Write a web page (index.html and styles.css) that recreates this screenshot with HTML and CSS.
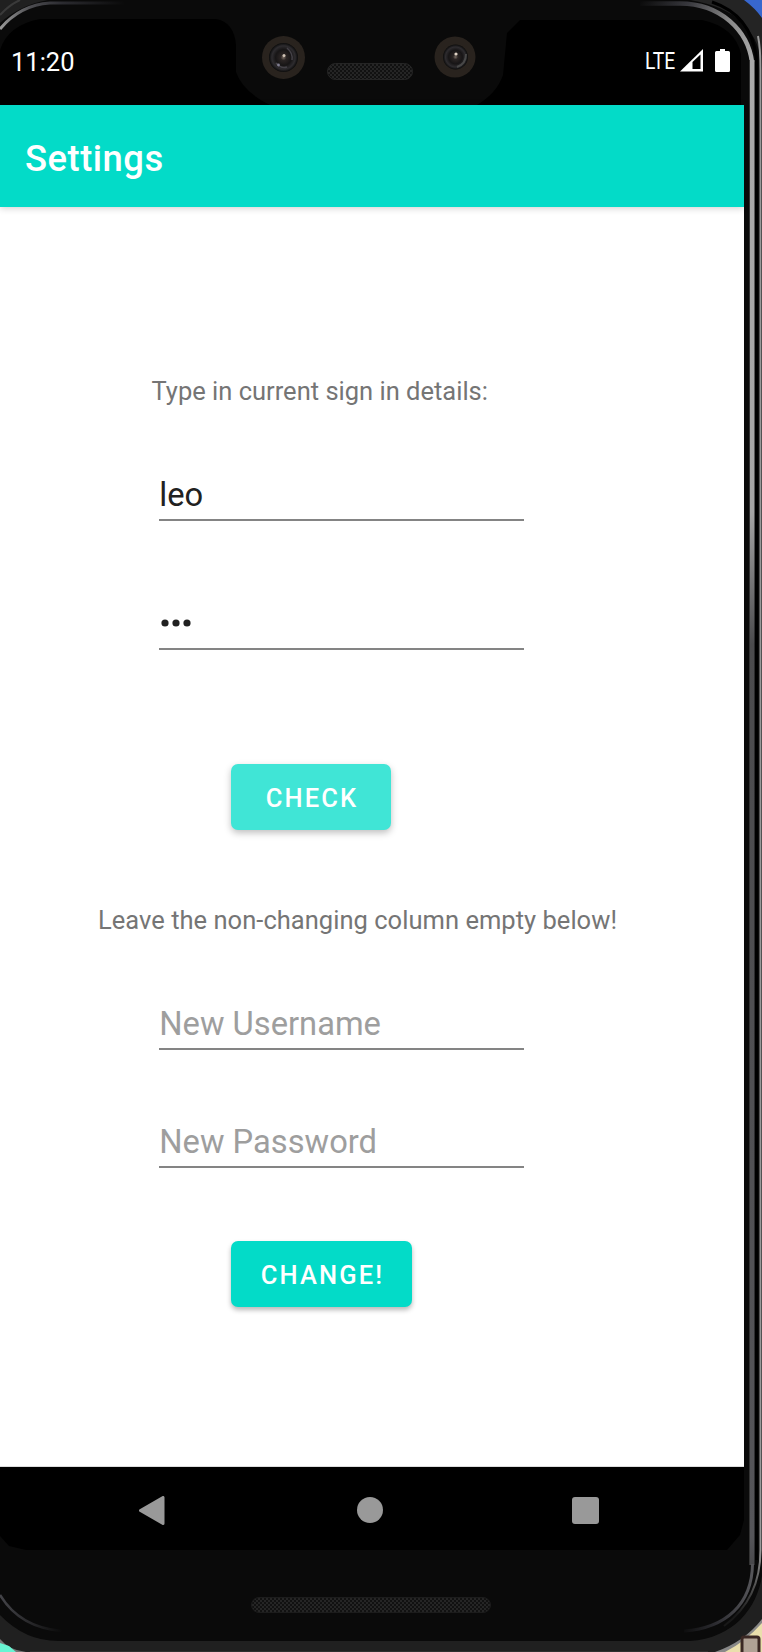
FILE: index.html
```html
<!DOCTYPE html>
<html lang="en">
<head>
<meta charset="utf-8">
<title>Settings</title>
<link rel="stylesheet" href="styles.css">
</head>
<body>
<div class="phone">
  <svg class="frame" viewBox="0 0 762 1652" aria-hidden="true">
    <defs>
      <linearGradient id="rail" gradientUnits="userSpaceOnUse" x1="0" y1="0" x2="0" y2="1652">
        <stop offset="0" stop-color="#777"/><stop offset=".03" stop-color="#aaa"/><stop offset=".31" stop-color="#a5a5a5"/><stop offset=".39" stop-color="#4b4b4d"/><stop offset=".93" stop-color="#555559"/><stop offset="1" stop-color="#222"/>
      </linearGradient>
      <linearGradient id="topRight" gradientUnits="userSpaceOnUse" x1="640" y1="0" x2="752" y2="60">
        <stop offset="0" stop-color="#0a0a0a"/><stop offset=".35" stop-color="#38383d"/><stop offset=".7" stop-color="#8a8a8a"/><stop offset="1" stop-color="#aaa"/>
      </linearGradient>
      <linearGradient id="topLeft" gradientUnits="userSpaceOnUse" x1="0" y1="0" x2="125" y2="0">
        <stop offset="0" stop-color="#999"/><stop offset=".25" stop-color="#4c4c50"/><stop offset=".5" stop-color="#2b2b30"/><stop offset="1" stop-color="#0a0a0a"/>
      </linearGradient>
      <linearGradient id="bottomLeft" gradientUnits="userSpaceOnUse" x1="0" y1="0" x2="62" y2="0">
        <stop offset="0" stop-color="#444449"/><stop offset="1" stop-color="#0a0a0a"/>
      </linearGradient>
      <linearGradient id="bottomRight" gradientUnits="userSpaceOnUse" x1="680" y1="0" x2="752" y2="0">
        <stop offset="0" stop-color="#0a0a0a"/><stop offset=".5" stop-color="#2c2c31"/><stop offset="1" stop-color="#555559"/>
      </linearGradient>
      <linearGradient id="edge" gradientUnits="userSpaceOnUse" x1="0" y1="1550" x2="0" y2="1615">
        <stop offset="0" stop-color="#999"/><stop offset="1" stop-color="#181818"/>
      </linearGradient>
      <radialGradient id="lens">
        <stop offset="0" stop-color="#776b62"/><stop offset=".2" stop-color="#2b2524"/><stop offset=".55" stop-color="#171516"/><stop offset=".8" stop-color="#2e2c2f"/><stop offset="1" stop-color="#0b0b0b"/>
      </radialGradient>
      <pattern id="mesh" width="4" height="4" patternUnits="userSpaceOnUse">
        <rect width="4" height="4" fill="#111"/><circle cx="1" cy="1" r=".7" fill="#484848"/><circle cx="3" cy="3" r=".7" fill="#484848"/>
      </pattern>
    </defs>
    <rect width="762" height="1652" fill="#0a0a0a"/>
    <path d="M0 0H48Q20 5 0 23Z" fill="#202020"/>
    <path d="M0 15Q9 5 20 0" fill="none" stroke="#3a3a3a" stroke-width="2"/>
    <path d="M0 29Q20 5 50 3H125" fill="none" stroke="url(#topLeft)" stroke-width="3"/>
    <path d="M690 0H762V60C755 30 738 8 690 0Z" fill="#242424"/>
    <path d="M744 0H762V18Q755 8 744 0Z" fill="#3867ce"/>
    <path d="M712 2Q751 15 756.500 58V1560" fill="none" stroke="#000" stroke-width="3"/>
    <path d="M640 3.500H680C721 3.500 748 31 752 62" fill="none" stroke="url(#topRight)" stroke-width="4.500"/>
    <rect x="749" y="60" width="1" height="1505" fill="#333"/>
    <rect x="750" y="60" width="4.500" height="1505" fill="url(#rail)"/>
    <path d="M758 36Q760.500 48 760.500 70V1550" fill="none" stroke="#999" stroke-width="2"/>
    <path d="M760.500 1550Q760.500 1599 724 1626" fill="none" stroke="url(#edge)" stroke-width="2"/>
    <path d="M752.500 1564C752 1604 726 1628 684 1631" fill="none" stroke="url(#bottomRight)" stroke-width="3"/>
    <path d="M0 1595Q20 1628 62 1631" fill="none" stroke="url(#bottomLeft)" stroke-width="2.500"/>
    <path d="M0 1615Q25 1641 58 1641H690C734 1638 757 1608 762 1576V1652H0Z" fill="#202020"/>
    <path d="M30 1652H708" stroke="#303030" stroke-width="2"/>
    <path d="M0 1639Q9 1650 26 1652H0Z" fill="#777"/>
    <path d="M0 1643L9 1646L16 1652H0Z" fill="#68f5d3"/>
    <path d="M762 1619Q744 1642 715 1652H762Z" fill="#888"/>
    <path d="M762 1623Q745 1642 725 1652H762Z" fill="#eadfac"/>
    <rect x="742" y="1637" width="17" height="18" rx="2" fill="#b0a295" stroke="#3b2824" stroke-width="3"/>
    <path d="M0 50Q8 25 40 19H216Q234 22 236 45V72Q243 92 270 105H0ZM477 105Q497 93 503 75L507 33L520 20H702Q735 27 741 54V105Z" fill="#000"/>
    <path d="M0 1467H744V1520L740 1535L727 1550H26L9 1546L0 1536Z" fill="#000"/>
    <g>
      <circle cx="283.500" cy="57.500" r="21.500" fill="#29231e"/><circle cx="283.500" cy="57.500" r="14.500" fill="url(#lens)"/>
      <path d="M287 48Q293 53 292 60M276 63Q281 69 287 67" fill="none" stroke="#444147" stroke-width="1.500"/>
      <circle cx="284" cy="55.500" r="1.500" fill="#d0c3b6"/><circle cx="278.500" cy="65" r="1.400" fill="#817f91"/>
      <circle cx="455" cy="57" r="20.500" fill="#29231e"/><circle cx="455.500" cy="57" r="12.500" fill="url(#lens)"/>
      <path d="M457 67Q466 64 466 54" fill="none" stroke="#484848" stroke-width="2"/>
      <circle cx="456" cy="54" r="1.600" fill="#e0d3c5"/>
    </g>
    <rect x="327.500" y="63.500" width="85" height="16" rx="8" fill="url(#mesh)" stroke="#252525"/>
    <rect x="251.500" y="1597.500" width="239" height="15" rx="7.500" fill="url(#mesh)" stroke="#1c1c1c"/>
  </svg>

  <div class="screen">
    <header class="status">
      <span class="clock">11:20</span>
      <span class="network">LTE</span>
      <svg class="signal" viewBox="0 0 24 23"><path d="M0 22.500L23 0V22.500Z" fill="#fff"/><path d="M12.500 13L20.500 5.500V20H12.500Z" fill="#000"/></svg>
      <svg class="battery" viewBox="0 0 15 23"><path d="M5 0H10V2H13.500Q15 2 15 3.500V21.500Q15 23 13.500 23H1.500Q0 23 0 21.500V3.500Q0 2 1.500 2H5Z" fill="#fff"/></svg>
    </header>
    <div class="toolbar"><h1 class="title">Settings</h1></div>
    <main class="content">
      <p class="note note-current">Type in current sign in details:</p>
      <div class="field field-user">leo</div>
      <div class="field field-pass"><svg class="dots" viewBox="0 0 30 8"><circle cx="4" cy="4" r="3.600"/><circle cx="15" cy="4" r="3.600"/><circle cx="26" cy="4" r="3.600"/></svg></div>
      <button class="button button-check">CHECK</button>
      <p class="note note-new">Leave the non-changing column empty below!</p>
      <div class="field field-hint field-new-user">New Username</div>
      <div class="field field-hint field-new-pass">New Password</div>
      <button class="button button-change">CHANGE!</button>
    </main>
    <nav class="navbar">
      <svg class="back" viewBox="0 0 26 29"><path d="M24 1.500V27.500L1.500 14.500Z" fill="#999" stroke="#999" stroke-width="3" stroke-linejoin="round"/></svg>
      <span class="home"></span>
      <span class="recent"></span>
    </nav>
  </div>
</div>
</body>
</html>
```

FILE: styles.css
```css
* { box-sizing: border-box; }
body { margin: 0; background: #0a0a0a; font-family: Roboto, "Liberation Sans", sans-serif; }
.phone { position: relative; width: 762px; height: 1652px; overflow: hidden; }
.frame { position: absolute; inset: 0; width: 762px; height: 1652px; }
.screen { position: relative; width: 744px; }

.status { display: flex; align-items: flex-start; height: 105px; padding-left: 11px; color: #fff; }
.clock { width: 634px; margin-top: 47px; font-size: 25.5px; line-height: 30px; }
.network { width: 35px; margin-top: 47px; font-size: 23.5px; line-height: 28px; transform: scaleX(.82); transform-origin: left; }
.signal { width: 24px; height: 23px; margin-top: 49px; }
.battery { width: 15px; height: 23px; margin: 49px 0 0 11px; }

.toolbar { display: flex; align-items: center; height: 102px; padding-left: 25px; background: #03dbc8; position: relative; box-shadow: 0 1px 7px rgba(0,0,0,.2); }
.title { margin: 5px 0 0; color: #fff; font-size: 36.4px; font-weight: 500; line-height: 44px; letter-spacing: .5px; }

.content { display: flex; flex-direction: column; align-items: flex-start; height: 1260px; background: #fff; border-bottom: 1px solid #ddd; }
.note { margin: 0; color: #757575; font-size: 25.5px; line-height: 30px; white-space: nowrap; }
.note-current { margin: 169px 0 0 151.5px; }
.note-new { margin: 75px 0 0 98px; letter-spacing: .03px; }
.field { width: 365px; height: 46px; margin-left: 159px; padding-left: .3px; border-bottom: 2px solid #848484; color: #212121; font-size: 32.7px; line-height: 41px; white-space: nowrap; }
.field-hint { color: #9e9e9e; }
.field-user { margin-top: 69px; }
.field-pass { display: flex; margin-top: 83px; padding-left: 1.5px; }
.dots { width: 30px; height: 8px; margin-top: 15px; fill: #212121; }
.field-new-user { margin-top: 69px; }
.field-new-pass { margin-top: 72px; }
.button { height: 66px; margin: 0 0 0 231px; padding: 1px 0 0 2px; border: 0; border-radius: 7px; background: #03dbc8; color: #fff; font: 500 25.5px/30px Roboto, "Liberation Sans", sans-serif; letter-spacing: 2.15px; box-shadow: 0 3px 5px rgba(0,0,0,.28); }
.button-check { width: 160px; margin-top: 114px; background: #40e5d6; box-shadow: 0 3px 7px rgba(0,0,0,.25); }
.button-change { width: 181px; margin-top: 73px; }

.navbar { display: flex; align-items: center; height: 83px; padding: 3px 0 0 139px; }
.back { width: 26px; height: 29px; }
.home { width: 26px; height: 26px; margin-left: 192px; border-radius: 50%; background: #999; }
.recent { width: 27px; height: 27px; margin-left: 189px; border-radius: 3px; background: #999; }
```
